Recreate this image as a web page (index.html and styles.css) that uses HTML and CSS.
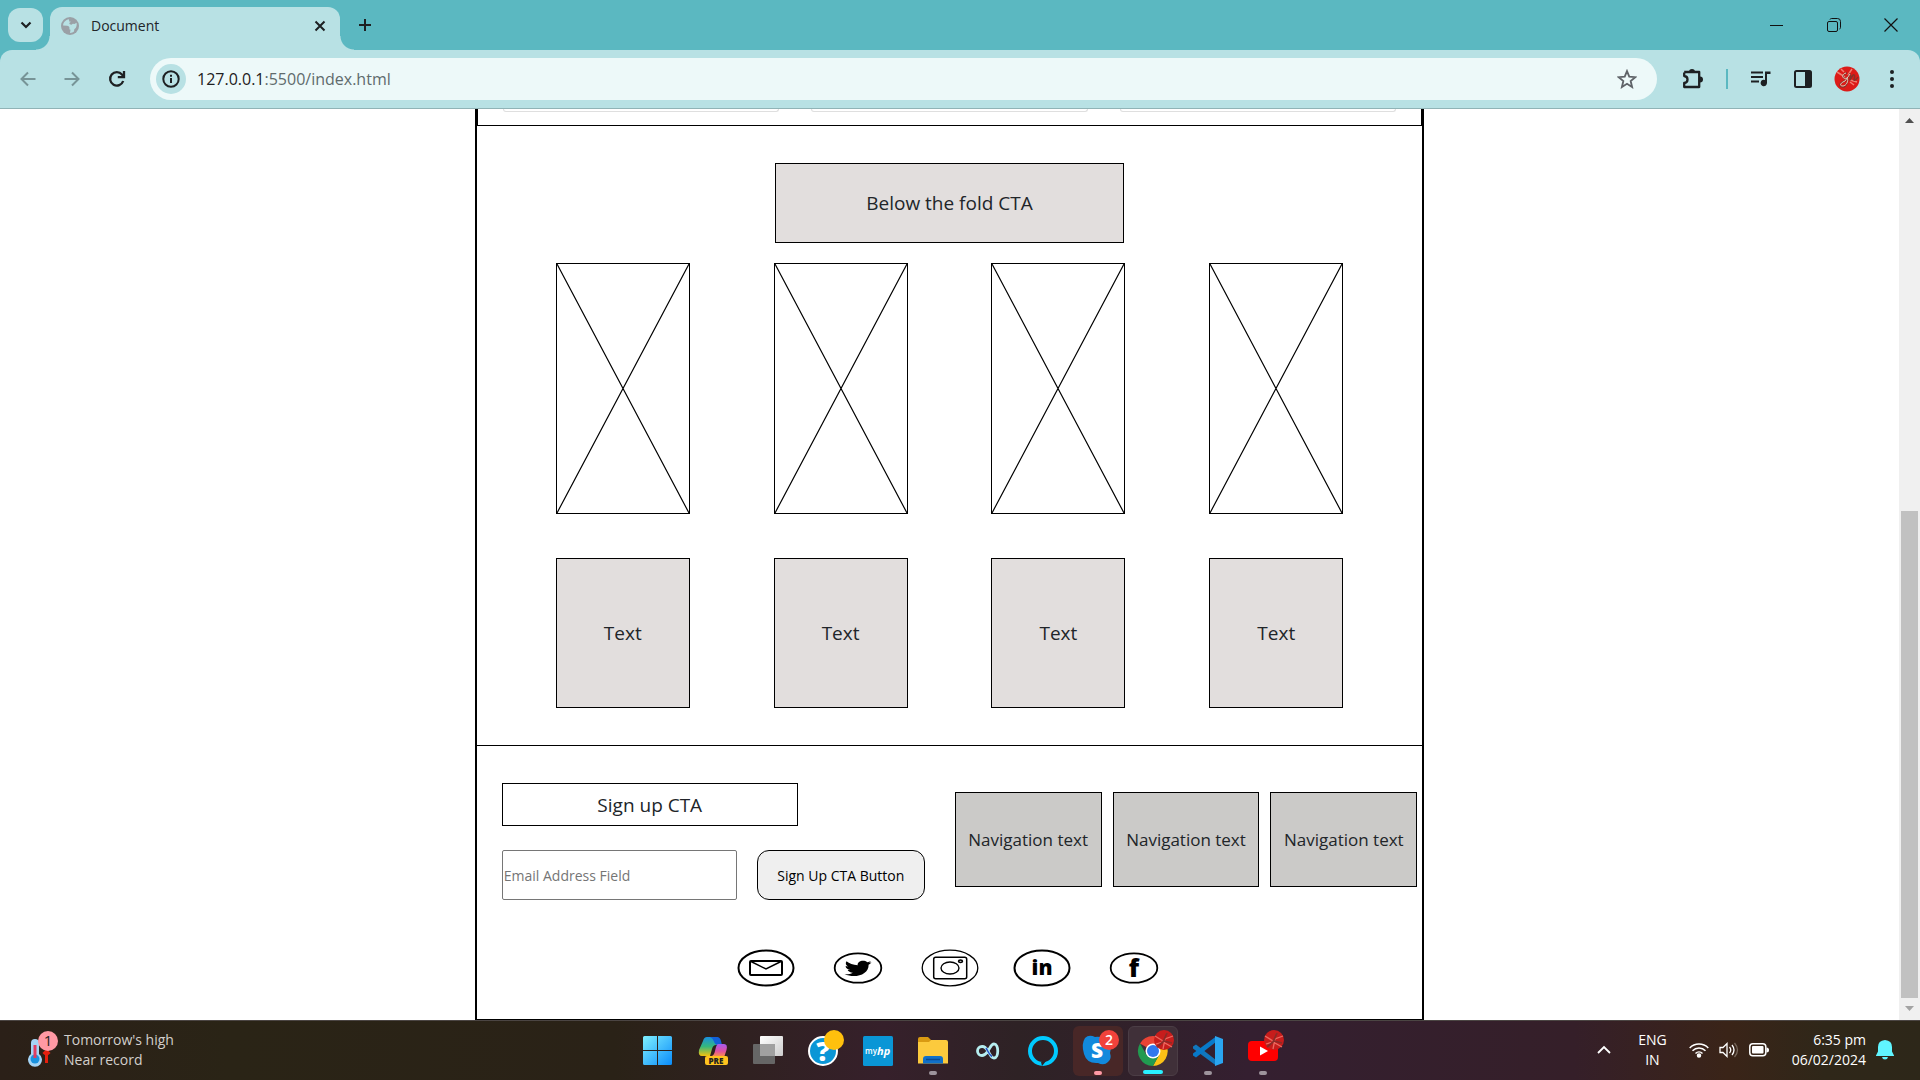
FILE: index.html
```html
<!DOCTYPE html>
<html lang="en">
<head>
<meta charset="utf-8">
<title>Document</title>
<link rel="stylesheet" href="styles.css">
</head>
<body>
<header class="browser">
  <div class="tab-strip">
    <button class="tab-search" aria-label="Search tabs"><svg width="12" height="8" viewBox="0 0 12 8"><path d="M1.500 1.500 6 6l4.500-4.500" fill="none" stroke="#1d2022" stroke-width="2.200"/></svg></button>
    <div class="tab">
      <svg width="18" height="18" viewBox="0 0 18 18"><circle cx="9" cy="9" r="9" fill="#9aa0a6"/><path d="M8 2.200c-3.500.500-5.800 3.300-5.900 6.200l4 .300c1.500.200 2.400 1 2.400 2.300l-.200 1.300 1.200.400-.500 3.200c1.500.100 3-.500 4-1.400l.300-2.300 1.400-1.100c1-1.800 1.300-3.600.800-5.300l-2 1.200-1.700-.300-1.300 1-1.700-.400-.600-1.300L10 4.800 8.200 4.500z" fill="#b8e1e4"/><path d="M10 1.500 13.500 3 12 5 9.500 3.500z" fill="#9aa0a6"/></svg>
      <span class="tab-title">Document</span>
      <button class="plain" aria-label="Close tab"><svg width="12" height="12" viewBox="0 0 12 12"><path d="m1.500 1.500 9 9m0-9-9 9" stroke="#1d2022" stroke-width="2"/></svg></button>
    </div>
    <button class="plain new-tab" aria-label="New tab"><svg width="14" height="14" viewBox="0 0 14 14"><path d="M7 1v12M1 7h12" stroke="#1d2022" stroke-width="2"/></svg></button>
    <div class="window-controls">
      <button class="plain" aria-label="Minimize"><svg width="14" height="14" viewBox="0 0 14 14"><path d="M0 7.500h13" stroke="#111"/></svg></button>
      <button class="plain" aria-label="Restore"><svg width="14" height="14" viewBox="0 0 14 14" fill="none" stroke="#111"><rect x=".5" y="3.500" width="10" height="10" rx="1.500"/><path d="M3 1.500Q3.300.5 4.500.5h6q3 0 3 3v6q0 1.200-1 1.500"/></svg></button>
      <button class="plain" aria-label="Close"><svg width="14" height="14" viewBox="0 0 14 14"><path d="m.5.5 13 13m0-13-13 13" stroke="#111" stroke-width="1.200"/></svg></button>
    </div>
  </div>
  <div class="toolbar">
    <div class="nav-buttons">
      <button class="plain" aria-label="Back"><svg width="16" height="16" viewBox="0 0 16 16" fill="none" stroke="#779497" stroke-width="2"><path d="M15.500 8H2M8 1.500 1.500 8 8 14.500"/></svg></button>
      <button class="plain" aria-label="Forward"><svg width="16" height="16" viewBox="0 0 16 16" fill="none" stroke="#779497" stroke-width="2"><path d="M.5 8H14M8 1.500 14.500 8 8 14.500"/></svg></button>
      <button class="plain" aria-label="Reload"><svg width="18" height="18" viewBox="0 0 18 18" fill="none" stroke="#1d2022" stroke-width="2.300"><path d="M15.200 11A6.700 6.700 0 1 1 14 4.600L16 6.500"/><path d="M16 1v6.200H9.800"/></svg></button>
    </div>
    <div class="address">
      <button class="site-info" aria-label="Site information"><svg width="18" height="18" viewBox="0 0 18 18"><circle cx="9" cy="9" r="7.700" fill="none" stroke="#1d2022" stroke-width="2"/><path d="M9 8v5M9 4.800v2" stroke="#1d2022" stroke-width="2"/></svg></button>
      <span class="url">127.0.0.1<span class="url-path">:5500/index.html</span></span>
      <button class="plain" aria-label="Bookmark"><svg width="20" height="20" viewBox="0 0 24 24"><path d="m12 2.500 2.700 6.700 7.200.6-5.500 4.700 1.700 7L12 17.700 5.900 21.500l1.700-7L2.100 9.800l7.200-.6z" fill="none" stroke="#5f6368" stroke-width="2.200"/></svg></button>
    </div>
    <div class="tools">
      <button class="plain" aria-label="Extensions"><svg width="22" height="22" viewBox="0 0 22 22"><path d="M3 4h4.500M2.200 4.500V8q3.300.3 3.300 3.500t-3.300 3.500v4h15V4h-15" fill="none" stroke="#1d2022" stroke-width="2.300" stroke-linejoin="round"/><path d="M7 4a3 3 0 0 1 6 0zM18 8.500a3 3 0 0 1 0 6z" fill="#1d2022"/></svg></button>
      <span class="divider"></span>
      <button class="plain" aria-label="Media"><svg width="22" height="22" viewBox="0 0 22 22"><path d="M1 4.500h12M1 9h12M1 13.500h8" stroke="#1d2022" stroke-width="2.200"/><path d="M15 3.500h5.500V6H17v9a3.200 3.200 0 1 1-2-3z" fill="#1d2022"/></svg></button>
      <button class="plain" aria-label="Side panel"><svg width="18" height="18" viewBox="0 0 18 18"><rect x="1" y="1" width="16" height="16" rx="1.500" fill="none" stroke="#1d2022" stroke-width="2"/><path d="M11 1h6v16h-6z" fill="#1d2022"/></svg></button>
      <button class="plain" aria-label="Profile"><svg width="26" height="26" viewBox="0 0 26 26"><circle cx="13" cy="13" r="12.500" fill="#dc1b18"/><path d="m3 6 8 5M18 3l-4 6m9 7-7-2M7 3l3 3m10 13-4-3" stroke="#f07d70" stroke-width="1.500"/><path d="M13 7c-5 1-5 7 0 5 2 3-1 9-4 9-5 0-4-4 2-6l5-7c2 2-1 6 0 6l3-5c3-1 1 4 1 5s3-1 4-3" fill="none" stroke="#8a3028" stroke-width="1.500"/><path d="M12 7c-5 1-4 7 1 5 2 3-1 8-4 8-4 0-3-3 2-5l5-7" fill="none" stroke="#e6c8b6" stroke-width="1"/></svg></button>
      <button class="plain menu" aria-label="Menu"><svg width="4" height="18" viewBox="0 0 4 18" fill="#1d2022"><circle cx="2" cy="2" r="2"/><circle cx="2" cy="9" r="2"/><circle cx="2" cy="16" r="2"/></svg></button>
    </div>
  </div>
</header>

<div class="viewport">
  <div class="content">
    <main class="page">
      <section class="cards"><div class="card"></div><div class="card"></div><div class="card"></div></section>
      <section class="fold">
        <div class="fold-cta">Below the fold CTA</div>
        <div class="columns">
          <svg class="placeholder" viewBox="0 0 134 251" preserveAspectRatio="none"><path d="m0 0 134 251M134 0 0 251"/></svg>
          <svg class="placeholder" viewBox="0 0 134 251" preserveAspectRatio="none"><path d="m0 0 134 251M134 0 0 251"/></svg>
          <svg class="placeholder" viewBox="0 0 134 251" preserveAspectRatio="none"><path d="m0 0 134 251M134 0 0 251"/></svg>
          <svg class="placeholder" viewBox="0 0 134 251" preserveAspectRatio="none"><path d="m0 0 134 251M134 0 0 251"/></svg>
        </div>
        <div class="columns captions">
          <div class="caption">Text</div><div class="caption">Text</div><div class="caption">Text</div><div class="caption">Text</div>
        </div>
      </section>
      <footer class="footer">
        <div class="footer-top">
          <form class="signup">
            <label class="signup-title" for="email">Sign up CTA</label>
            <div class="signup-row">
              <input class="email" id="email" type="email" placeholder="Email Address Field">
              <button class="signup-button" type="button">Sign Up CTA Button</button>
            </div>
          </form>
          <nav class="footer-nav">
            <a href="#">Navigation text</a><a href="#">Navigation text</a><a href="#">Navigation text</a>
          </nav>
        </div>
        <div class="social">
          <a href="#" aria-label="Email"><svg width="58" height="38" viewBox="0 0 58 38" fill="none" stroke="#000"><ellipse cx="29" cy="19" rx="27.500" ry="17.500" stroke-width="2"/><rect x="13" y="12" width="32" height="14" rx="1" stroke-width="2"/><path d="m14 12.500 15 7.500 15-7.500" stroke-width="1.500"/></svg></a>
          <a href="#" aria-label="Twitter"><svg width="58" height="38" viewBox="0 0 58 38"><ellipse cx="29" cy="19" rx="23.300" ry="14.700" fill="none" stroke="#000" stroke-width="1.800"/><path d="M42.500 13.200c-1 .3-1.700.6-3 .7 1.200-.4 1.800-.9 2.300-1.600-1.200.4-2.200.7-3.500.9-4-3-10.400-.6-9.600 3-4.600-.2-8.500-1.700-11.200-4-1.400 1.900-.7 4.200 1.700 5.300l-2.600-.5c0 2 2 3.500 4.600 4l-2.600.1c.8 1.600 2.600 2.500 5.200 2.600-2.300 1.300-4.800 1.700-8.300 1.500 11 4.500 24.500.4 24.100-9.500 1.100-.6 2.200-1.500 2.900-2.500z"/></svg></a>
          <a href="#" aria-label="Instagram"><svg width="58" height="38" viewBox="0 0 58 38" fill="none" stroke="#000"><ellipse cx="29" cy="19" rx="27.800" ry="17.800" stroke-width="1.300"/><rect x="12.700" y="8.300" width="33" height="21.500" rx="2" stroke-width="1.500"/><ellipse cx="29" cy="19" rx="9" ry="6" stroke-width="1.400"/><ellipse cx="39.500" cy="12.200" rx="2" ry="1.200" stroke-width="1.500"/></svg></a>
          <a href="#" aria-label="LinkedIn"><svg width="58" height="38" viewBox="0 0 58 38"><ellipse cx="29" cy="19" rx="27.500" ry="17.500" fill="none" stroke="#000" stroke-width="2"/><text class="logo-in" x="29" y="26" text-anchor="middle">in</text></svg></a>
          <a href="#" aria-label="Facebook"><svg width="58" height="38" viewBox="0 0 58 38"><ellipse cx="29" cy="19" rx="23.300" ry="14.700" fill="none" stroke="#000" stroke-width="1.800"/><text class="logo-f" x="29" y="28" text-anchor="middle">f</text></svg></a>
        </div>
      </footer>
    </main>
  </div>
  <div class="scrollbar">
    <svg width="9" height="5" viewBox="0 0 9 5"><path d="M0 5 4.500 0 9 5z" fill="#505050"/></svg>
    <div class="track"><div class="thumb"></div></div>
    <svg width="9" height="5" viewBox="0 0 9 5"><path d="M0 0 4.500 5 9 0z" fill="#a3a3a3"/></svg>
  </div>
</div>

<div class="taskbar">
  <div class="weather">
    <svg width="34" height="40" viewBox="0 0 34 40"><path d="M6 13a4 4 0 0 1 8 0v11a7 7 0 1 1-8 0z" fill="#a5d4f5"/><circle cx="10" cy="29" r="4.500" fill="#1992e0"/><path d="M10 15v13" stroke="#e03c60" stroke-width="3"/><path d="M21.500 33V22m-3 2 3-3 3 3" fill="none" stroke="#e51f0e" stroke-width="3"/><circle cx="23" cy="11" r="10" fill="#ff99a4"/><text class="badge-one" x="23" y="16" text-anchor="middle">1</text></svg>
    <div class="weather-text">Tomorrow's high<br>Near record</div>
  </div>
  <div class="apps">
    <button class="app" aria-label="Start"><svg width="29" height="29" viewBox="0 0 29 29"><defs><linearGradient id="win" x2="1" y2="1"><stop stop-color="#7ff0ff"/><stop offset="1" stop-color="#0a8cfa"/></linearGradient></defs><path d="M0 1.500Q0 0 1.500 0H14v14H0zM15 0h12.500Q29 0 29 1.500V14H15zM0 15h14v14H1.500Q0 29 0 27.500zm15 0h14v12.500q0 1.500-1.500 1.500H15z" fill="url(#win)"/></svg></button>
    <button class="app" aria-label="Copilot"><svg width="32" height="30" viewBox="0 0 32 30"><defs><linearGradient id="cpa" x2="0" y2="1"><stop stop-color="#1a8fe0"/><stop offset=".5" stop-color="#35b87d"/><stop offset="1" stop-color="#f4c20e"/></linearGradient><linearGradient id="cpb" x2="0" y2="1"><stop stop-color="#a45bf0"/><stop offset=".6" stop-color="#e050a0"/><stop offset="1" stop-color="#fa8a50"/></linearGradient></defs><path d="M9 1h10q3 0 4 4l1 4h-5q-3 0-4 4l-2 7H5q-4 0-3-6L6 5q1-4 4-4z" fill="url(#cpa)"/><path d="M13 1h7q3 0 4 4l1 4h-4q-3 0-4-3.500T13 1z" fill="#1260d8"/><path d="M21 8h6q4 0 2.500 6l-2 6H14q3 0 4-5l1-4q1-3 2-3z" fill="url(#cpb)"/><rect x="8" y="20" width="23" height="9" rx="2" fill="#ffc31f"/><text class="logo-pre" x="19" y="28" text-anchor="middle">PRE</text></svg></button>
    <button class="app" aria-label="Task view"><svg width="30" height="30" viewBox="0 0 30 30"><defs><linearGradient id="tv" x2="1" y2="1"><stop stop-color="#fff"/><stop offset="1" stop-color="#ccc"/></linearGradient></defs><rect y="8" width="22" height="20" rx="1" fill="#666"/><rect x="7" y="0" width="23" height="20" rx="1" fill="url(#tv)"/><path d="M7 8h15v12H7z" fill="#a0a0a0"/></svg></button>
    <button class="app" aria-label="Help"><svg width="44" height="44" viewBox="-6 0 44 44"><circle cx="16" cy="22" r="14" fill="#0a96d6" stroke="#fff" stroke-width="2"/><text class="logo-help" x="16" y="32" text-anchor="middle">?</text><circle cx="27" cy="11" r="10" fill="#ffc00d"/></svg></button>
    <button class="app" aria-label="myHP"><svg width="30" height="30" viewBox="0 0 30 30"><rect width="30" height="30" rx="1.500" fill="#0a96d6"/><text class="logo-my" x="2" y="18">my</text><text class="logo-hp" x="14" y="19">hp</text></svg></button>
    <button class="app" aria-label="File Explorer"><svg width="30" height="28" viewBox="0 0 30 28"><path d="M0 2q0-2 2-2h8l3 3-2 6H0z" fill="#d99a12"/><path d="M0 5h11l2-2h15q2 0 2 2v21.500H0z" fill="#fcca3d"/><path d="M5 26.500V22q0-3 3-3h14q3 0 3 3v4.500z" fill="#1070c8"/><path d="M8 22.500h14" stroke="#084a94" stroke-width="1.500"/></svg><span class="running"></span></button>
    <button class="app" aria-label="Infinity"><svg width="24" height="18" viewBox="0 0 24 18"><path d="M12 9C9 4 7 4.500 6 4.500a4.500 4.500 0 0 0 0 9c3 0 4-2 6-4.500s3-7 6-7c5 0 5 14 0 14-3 0-4-4-6-7z" fill="none" stroke="#b6eef0" stroke-width="2.800"/><path d="M10 6c2 3 3 7 6 8.500" fill="none" stroke="#2453c8" stroke-width="1.500"/></svg></button>
    <button class="app" aria-label="Alexa"><svg width="30" height="30" viewBox="0 0 30 30"><circle cx="15" cy="15" r="13" fill="none" stroke="#00caff" stroke-width="4"/><path d="m13 26 6-2-5 6z" fill="#2c2226"/></svg></button>
    <button class="app alert" aria-label="Skype"><svg width="44" height="44" viewBox="-6 0 44 44"><path d="M3 9q4-4 10-1 9-1 13 5 4 5 2 11 2 6-2 9-4 4-10 1-11 1-14-9Q-1 15 3 9z" fill="#1289dc"/><text class="logo-s" x="15" y="29" text-anchor="middle">S</text><circle cx="27" cy="11" r="10" fill="#f2423b"/><text class="badge-two" x="27" y="16" text-anchor="middle">2</text></svg><span class="running pink"></span></button>
    <button class="app active" aria-label="Chrome"><svg width="44" height="44" viewBox="-6 0 44 44"><path d="M16 22 3 14.500A15 15 0 0 1 29 14.500z" fill="#ea4335"/><path d="M3 14.500 9.500 26 16 22v15A15 15 0 0 1 3 14.500z" fill="#219a50"/><path d="M16 22V15h13a15 15 0 0 1-13 22l6-11z" fill="#fbc116"/><path d="m9.500 25.700 12.700.3L16 37z" fill="#219a50"/><circle cx="16" cy="22" r="7.500" fill="#fff"/><circle cx="16" cy="22" r="6" fill="#2f78ee"/><circle cx="27" cy="11" r="10" fill="#c61d1c"/><path d="m18 7 8 5m10-5-8 3-2 10m-7-5 7-2 9 5" stroke="#ee6a60" stroke-width="1.300" fill="none"/><path d="m20 18 6-5 4-9m-3 8 8 2" stroke="#8a2c28" stroke-width="1.800" fill="none"/></svg><span class="running wide"></span></button>
    <button class="app" aria-label="Visual Studio Code"><svg width="30" height="30" viewBox="0 0 30 30"><path d="M0 10.500 3 8.500 23 24v5.500L0 12.500z" fill="#1177bd"/><path d="M0 19.500 3 21.500 23 6V.5L0 17.500z" fill="#0879c9"/><path d="m22 0 8 3v24l-8 3z" fill="#2aa5f0"/></svg><span class="running"></span></button>
    <button class="app" aria-label="YouTube"><svg width="44" height="44" viewBox="-6 0 44 44"><rect x="1" y="12" width="30" height="20" rx="4" fill="#f00"/><path d="m13 17.500 8 4.500-8 4.500z" fill="#fff"/><circle cx="27" cy="11" r="10" fill="#c61d1c"/><path d="m18 7 8 5m10-5-8 3-2 10m-7-5 7-2 9 5" stroke="#ee6a60" stroke-width="1.300" fill="none"/><path d="m20 18 6-5 4-9m-3 8 8 2" stroke="#8a2c28" stroke-width="1.800" fill="none"/></svg><span class="running"></span></button>
  </div>
  <div class="tray">
    <svg width="14" height="9" viewBox="0 0 14 9"><path d="m1 8 6-6 6 6" fill="none" stroke="#fff" stroke-width="1.800"/></svg>
    <div class="language">ENG<br>IN</div>
    <div class="status">
      <svg width="20" height="16" viewBox="0 0 20 16" fill="none" stroke="#fff" stroke-width="1.500"><path d="M.7 6a13 13 0 0 1 18.600 0M3.500 8.800a9 9 0 0 1 13 0M6.500 11.500a5 5 0 0 1 7 0"/><circle cx="10" cy="13.500" r="1.500" fill="#fff"/></svg>
      <svg width="20" height="18" viewBox="0 0 20 18" fill="none" stroke="#fff" stroke-width="1.300"><path d="M1 6.500h3L8 2.500v13L4 11.500H1z"/><path d="M10.500 6q2.500 3 0 6M13 4q4 5 0 10"/><path d="M15.500 2q6 7 0 14" stroke="#75665a"/></svg>
      <svg width="20" height="14" viewBox="0 0 20 14"><rect x=".8" y=".8" width="16" height="12" rx="3" fill="none" stroke="#fff" stroke-width="1.500"/><rect x="3" y="3" width="11.500" height="7.500" rx="1" fill="#fff"/><path d="M17.500 4.500q2.500 0 2.500 2.500t-2.500 2.500z" fill="#fff"/></svg>
    </div>
    <div class="clock">6:35 pm<br>06/02/2024</div>
    <svg width="18" height="20" viewBox="0 0 18 20" fill="#60f5ff"><path d="M9 0q7 .5 7 7v4.500l2 4V16H0v-.5l2-4V7Q2 .5 9 0zM6 17h6q-.5 2.500-3 2.500T6 17z"/></svg>
  </div>
</div>
</body>
</html>
```
FILE: styles.css
```css
* { box-sizing: border-box; }
body {
  margin: 0;
  min-height: 100vh;
  display: flex;
  flex-direction: column;
  background: #fff;
  color: #212529;
  font-family: "Open Sans", "Noto Sans", sans-serif;
}
svg { display: block; flex: none; }
button { font: inherit; }
.plain { border: 0; padding: 0; background: none; display: grid; place-items: center; }

/* Browser window */
.browser { background: #5bb8c1; }
.tab-strip { display: flex; align-items: center; height: 50px; padding-left: 8px; }
.tab-search { display: grid; place-items: center; width: 35px; height: 34px; padding: 0; border: 0; border-radius: 12px; background: #b8e1e4; }
.tab {
  position: relative;
  align-self: flex-end;
  display: flex;
  align-items: center;
  gap: 12px;
  width: 290px;
  height: 43px;
  margin-left: 7px;
  padding: 0 14px 6px 11px;
  border-radius: 12px 12px 0 0;
  background: #b8e1e4;
}
.tab::before, .tab::after {
  content: "";
  position: absolute;
  bottom: 0;
  width: 14px;
  height: 14px;
}
.tab::before { right: 100%; background: radial-gradient(circle at 0 0, transparent 13px, #b8e1e4 14px); }
.tab::after { left: 100%; background: radial-gradient(circle at 100% 0, transparent 13px, #b8e1e4 14px); }
.tab-title { flex: 1; font-size: 14px; line-height: 20px; }
.new-tab { margin-left: 18px; }
.window-controls { display: flex; gap: 43px; margin-left: auto; padding-right: 22px; }
.toolbar {
  display: flex;
  align-items: center;
  height: 59px;
  padding: 0 18px 0 20px;
  border-bottom: 1px solid #90b3b6;
  border-radius: 12px 12px 0 0;
  background: #b8e1e4;
}
.nav-buttons { display: flex; align-items: center; gap: 28px; width: 130px; }
.address {
  flex: 1;
  display: flex;
  align-items: center;
  height: 42px;
  padding: 0 20px 0 6px;
  border-radius: 21px;
  background: #edf9f9;
}
.site-info { display: grid; place-items: center; width: 30px; height: 30px; padding: 0; border: 0; border-radius: 50%; background: #b8e1e4; }
.url { flex: 1; margin-left: 11px; font-size: 16px; line-height: 24px; color: #1d2022; }
.url-path { color: #5f6b6d; }
.tools { display: flex; align-items: center; gap: 22px; padding-left: 25px; }
.divider { width: 2px; height: 20px; background: #5bb8c1; }
.menu { width: 20px; }

/* Page area */
.viewport { flex: 1; display: flex; }
.content { flex: 1; }
.page { width: 50%; margin: 0 auto; border: solid #000; border-width: 0 2px 1px; }
.cards { display: grid; grid-template-columns: repeat(3, 1fr); gap: 32px; padding: 0 25px 13px; border: solid #000; border-width: 0 1px 1px; }
.card { height: 3px; border: solid #dfdfdf; border-width: 0 1px 1px; border-radius: 0 0 5px 5px; }
.fold { padding: 37px 79px; border-bottom: 1px solid #000; }
.fold-cta {
  display: grid;
  place-items: center;
  width: 349px;
  height: 80px;
  margin: 0 auto 20px;
  border: 1px solid #000;
  background: #e2dedd;
  font-size: 19px;
}
.columns { display: flex; justify-content: space-between; }
.placeholder { width: 134px; height: 251px; border: 1px solid #000; fill: none; stroke: #000; stroke-width: 1.2px; }
.captions { margin-top: 44px; }
.caption { display: grid; place-items: center; width: 134px; height: 150px; border: 1px solid #000; background: #e2dedd; font-size: 19px; }
.footer { padding: 37px 5px 32px 25px; }
.footer-top { display: flex; gap: 30px; }
.signup { width: 423px; }
.signup-title { display: grid; place-items: center; width: 296px; height: 43px; margin-bottom: 24px; border: 1px solid #000; font-size: 19px; }
.signup-row { display: flex; gap: 20px; }
.email { flex: 1; min-width: 0; height: 50px; padding: 1px; border: 1px solid #767676; border-radius: 2px; font: 14px "Open Sans", sans-serif; }
.email::placeholder { color: #757575; }
.signup-button { width: 168px; height: 50px; padding: 0; border: 1px solid #000; border-radius: 12px; background: #efefef; color: #000; font-size: 14px; }
.footer-nav { flex: 1; display: grid; grid-template-columns: repeat(3, 1fr); gap: 11px; padding-top: 9px; }
.footer-nav a { display: grid; place-items: center; height: 95px; border: 1px solid #000; background: #cbcac8; color: #212529; font-size: 17px; text-decoration: none; white-space: nowrap; }
.social { display: flex; justify-content: center; gap: 34px; margin-top: 49px; padding-right: 20px; }
.logo-in { font: 800 21px "Open Sans", sans-serif; }
.logo-f { font: 800 25px "Open Sans", sans-serif; }

.scrollbar { display: flex; flex-direction: column; align-items: center; width: 21px; padding: 9px 0; background: #f0f0f0; }
.track { flex: 1; display: flex; flex-direction: column; justify-content: flex-end; padding: 6px 0 8px; }
.thumb { width: 17px; height: 56%; background: #c1c1c1; }

/* Desktop taskbar */
.taskbar {
  display: grid;
  grid-template-columns: 1fr auto 1fr;
  align-items: center;
  height: 60px;
  border-top: 1px solid #4b4543;
  background: linear-gradient(90deg, #2b2018, #2a2416 12%, #2a2217 32%, #36202b 46%, #2e2225 53%, #341f30 65%, #351f29 82%, #3a2418 90%, #2f2719 95%, #2d2719);
  color: #fff;
  font-size: 14px;
  line-height: 20px;
}
.weather { display: flex; align-items: center; gap: 5px; padding: 0 0 2px 25px; color: #d2cfcc; }
.badge-one { font: 15px "Open Sans", sans-serif; fill: #222; }
.apps { display: flex; gap: 5px; }
.app { position: relative; display: grid; place-items: center; width: 50px; height: 50px; padding: 0; border: 0; border-radius: 6px; background: none; }
.alert { background: #482727; }
.active { background: #403039; border: 1px solid #4b3d45; }
.running { position: absolute; bottom: 1px; left: calc(50% - 4px); width: 8px; height: 4px; border-radius: 2px; background: #9d949c; }
.pink { background: #ff99a4; }
.wide { left: calc(50% - 10px); width: 20px; background: #29f0ff; }
.logo-pre { font: 800 8px "Open Sans", sans-serif; fill: #222; }
.logo-help { font: 800 27px "Open Sans", sans-serif; fill: #fff; }
.logo-my { font: 600 8px "Open Sans", sans-serif; fill: #fff; }
.logo-hp { font: italic 700 11px "Open Sans", sans-serif; fill: #fff; }
.logo-s { font: 800 21px "Open Sans", sans-serif; fill: #fff; }
.badge-two { font: 600 14px "Open Sans", sans-serif; fill: #fff; }
.tray { display: flex; align-items: center; justify-content: flex-end; padding: 0 26px 2px 0; }
.language { margin: 0 22px 0 27px; text-align: center; }
.status { display: flex; align-items: center; gap: 10px; }
.clock { margin: 0 10px 0 23px; text-align: right; }
```
